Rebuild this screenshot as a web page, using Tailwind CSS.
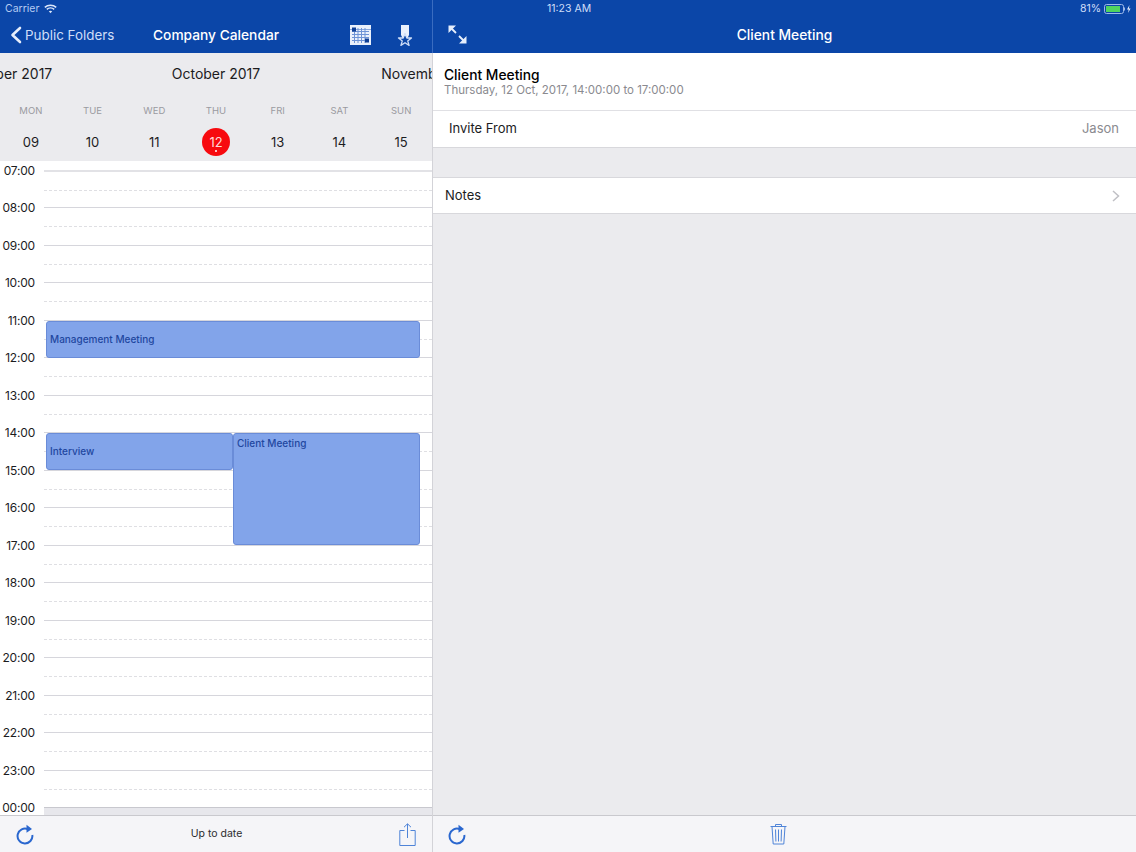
<!DOCTYPE html>
<html lang="en">
<head>
  <meta charset="UTF-8" />
  <title>Company Calendar</title>
  <script src="https://cdn.jsdelivr.net/npm/@tailwindcss/browser@4"></script>
</head>
<body class="w-[1136px] h-[852px] overflow-hidden font-['Inter','Liberation_Sans',sans-serif] bg-[#ebebee]">
<div class="flex h-[852px]">

  <!-- left pane: calendar -->
  <div class="w-[432px] shrink-0 flex flex-col">
    <div class="h-[53px] bg-[#0b46a8] text-white">
      <div class="h-[17px] flex items-center gap-[5px] pl-[5px] text-[10.5px] text-[#b4cbf2]">
        <span>Carrier</span>
        <svg width="13" height="10" viewBox="0 0 13 10" fill="none" stroke="#dce7fa" stroke-width="1.5"><path d="M.8 3.4C4 .5 9 .5 12.2 3.4M2.8 5.4C4.9 3.6 8.1 3.6 10.2 5.4"/><path d="M4.8 7.3C5.8 6.5 7.2 6.5 8.2 7.3L6.5 9.2z" fill="#dce7fa" stroke="none"/></svg>
      </div>
      <div class="h-[36px] flex items-center">
        <div class="w-[153px] flex items-center shrink-0">
          <svg class="ml-[10px]" width="12" height="18" viewBox="0 0 12 18" fill="none" stroke="#e6eefc" stroke-width="2.6" stroke-linecap="round" stroke-linejoin="round"><path d="M10 2 2.5 9l7.500 7"/></svg>
          <span class="ml-[3px] text-[13.4px] text-[#cfdef8] whitespace-nowrap">Public Folders</span>
        </div>
        <span class="w-[126px] shrink-0 text-[13.75px] font-medium whitespace-nowrap">Company Calendar</span>
        <svg class="ml-[71px]" width="21" height="20" viewBox="0 0 21 20">
          <rect width="21" height="20" fill="#e9f0fc"/>
          <path d="M0 4.500h21" stroke="#8ba9dd" stroke-width="1"/>
          <path d="M2 6.500h17M2 9.500h17M2 12.500h17M2 15.500h17M4.500 3v15M8 3v15M11.500 3v15M15 3v15" stroke="#6d93d6" stroke-width="1"/>
          <rect x="2" y="2.500" width="4" height="4" fill="#0f3f96"/>
          <rect x="15" y="13.500" width="4" height="4" fill="#0f3f96"/>
        </svg>
        <svg class="ml-[26px]" width="16" height="21" viewBox="0 0 16 21">
          <path d="M4 0h8v10l-1.500 3h-5L4 10z" fill="#e9f0fc"/>
          <path d="M8 8.500 9.800 13h4.700l-3.800 2.900 1.400 4.500L8 17.700l-4.100 2.700 1.400-4.500L1.500 13h4.700z" fill="#0b46a8" stroke="#cfdef8" stroke-width="1.300" stroke-linejoin="round"/>
        </svg>
      </div>
    </div>

    <div class="h-[108px] bg-[#ebebee] overflow-hidden">
      <div class="h-[42px] pt-[12px] grid grid-cols-[1fr_auto_1fr] gap-[121px] text-[14px] leading-[18px] text-[#1c1c1e] overflow-hidden">
        <div class="flex justify-end min-w-0"><span class="whitespace-nowrap mr-[-1.5px]">September 2017</span></div>
        <span class="whitespace-nowrap">October 2017</span>
        <div class="flex justify-start min-w-0"><span class="whitespace-nowrap">November 2017</span></div>
      </div>
      <div class="grid grid-cols-7 text-center text-[9.5px] leading-[12px] text-[#9a9aa0] mt-[10px]">
        <span>MON</span><span>TUE</span><span>WED</span><span>THU</span><span>FRI</span><span>SAT</span><span>SUN</span>
      </div>
      <div class="grid grid-cols-7 text-center text-[13px] leading-[28px] text-[#1c1c1e] mt-[11px] items-center h-[28px]">
        <span>09</span><span>10</span><span>11</span>
        <span class="relative mx-auto w-[28px] h-[28px] rounded-full bg-[#f70a0f] text-[#ffd9d9]">12<span class="absolute left-[13px] top-[22px] w-[2px] h-[2px] rounded-full bg-white"></span></span>
        <span>13</span><span>14</span><span>15</span>
      </div>
    </div>

    <div class="relative flex-1 bg-white overflow-hidden pt-[9px] text-[12px] tracking-[-0.2px] leading-[16px] text-[#1c1c1e]">
      <div class="flex h-[37.47px]"><span class="w-[44px] pr-[9px] text-right -mt-[7px]">07:00</span><div class="flex-1 border-t-2 border-[#e2e2e6]"><div class="mt-[17.5px] border-t border-dashed border-[#dfdfe3]"></div></div></div>
      <div class="flex h-[37.47px]"><span class="w-[44px] pr-[9px] text-right -mt-[7px]">08:00</span><div class="flex-1 border-t border-[#d6d6dc]"><div class="mt-[18px] border-t border-dashed border-[#dfdfe3]"></div></div></div>
      <div class="flex h-[37.47px]"><span class="w-[44px] pr-[9px] text-right -mt-[7px]">09:00</span><div class="flex-1 border-t border-[#d6d6dc]"><div class="mt-[18px] border-t border-dashed border-[#dfdfe3]"></div></div></div>
      <div class="flex h-[37.47px]"><span class="w-[44px] pr-[9px] text-right -mt-[7px]">10:00</span><div class="flex-1 border-t border-[#d6d6dc]"><div class="mt-[18px] border-t border-dashed border-[#dfdfe3]"></div></div></div>
      <div class="flex h-[37.47px]"><span class="w-[44px] pr-[9px] text-right -mt-[7px]">11:00</span><div class="flex-1 border-t border-[#d6d6dc]"><div class="mt-[18px] border-t border-dashed border-[#dfdfe3]"></div></div></div>
      <div class="flex h-[37.47px]"><span class="w-[44px] pr-[9px] text-right -mt-[7px]">12:00</span><div class="flex-1 border-t border-[#d6d6dc]"><div class="mt-[18px] border-t border-dashed border-[#dfdfe3]"></div></div></div>
      <div class="flex h-[37.47px]"><span class="w-[44px] pr-[9px] text-right -mt-[7px]">13:00</span><div class="flex-1 border-t border-[#d6d6dc]"><div class="mt-[18px] border-t border-dashed border-[#dfdfe3]"></div></div></div>
      <div class="flex h-[37.47px]"><span class="w-[44px] pr-[9px] text-right -mt-[7px]">14:00</span><div class="flex-1 border-t border-[#d6d6dc]"><div class="mt-[18px] border-t border-dashed border-[#dfdfe3]"></div></div></div>
      <div class="flex h-[37.47px]"><span class="w-[44px] pr-[9px] text-right -mt-[7px]">15:00</span><div class="flex-1 border-t border-[#d6d6dc]"><div class="mt-[18px] border-t border-dashed border-[#dfdfe3]"></div></div></div>
      <div class="flex h-[37.47px]"><span class="w-[44px] pr-[9px] text-right -mt-[7px]">16:00</span><div class="flex-1 border-t border-[#d6d6dc]"><div class="mt-[18px] border-t border-dashed border-[#dfdfe3]"></div></div></div>
      <div class="flex h-[37.47px]"><span class="w-[44px] pr-[9px] text-right -mt-[7px]">17:00</span><div class="flex-1 border-t border-[#d6d6dc]"><div class="mt-[18px] border-t border-dashed border-[#dfdfe3]"></div></div></div>
      <div class="flex h-[37.47px]"><span class="w-[44px] pr-[9px] text-right -mt-[7px]">18:00</span><div class="flex-1 border-t border-[#d6d6dc]"><div class="mt-[18px] border-t border-dashed border-[#dfdfe3]"></div></div></div>
      <div class="flex h-[37.47px]"><span class="w-[44px] pr-[9px] text-right -mt-[7px]">19:00</span><div class="flex-1 border-t border-[#d6d6dc]"><div class="mt-[18px] border-t border-dashed border-[#dfdfe3]"></div></div></div>
      <div class="flex h-[37.47px]"><span class="w-[44px] pr-[9px] text-right -mt-[7px]">20:00</span><div class="flex-1 border-t border-[#d6d6dc]"><div class="mt-[18px] border-t border-dashed border-[#dfdfe3]"></div></div></div>
      <div class="flex h-[37.47px]"><span class="w-[44px] pr-[9px] text-right -mt-[7px]">21:00</span><div class="flex-1 border-t border-[#d6d6dc]"><div class="mt-[18px] border-t border-dashed border-[#dfdfe3]"></div></div></div>
      <div class="flex h-[37.47px]"><span class="w-[44px] pr-[9px] text-right -mt-[7px]">22:00</span><div class="flex-1 border-t border-[#d6d6dc]"><div class="mt-[18px] border-t border-dashed border-[#dfdfe3]"></div></div></div>
      <div class="flex h-[37.47px]"><span class="w-[44px] pr-[9px] text-right -mt-[7px]">23:00</span><div class="flex-1 border-t border-[#d6d6dc]"><div class="mt-[18px] border-t border-dashed border-[#dfdfe3]"></div></div></div>
      <div class="flex h-[37.47px]"><span class="w-[44px] pr-[9px] text-right -mt-[7px]">00:00</span><div class="flex-1 border-t border-[#c8c8ce] bg-[#e7e7ec]"></div></div>

      <!-- events sit on top of the hour grid -->
      <div class="absolute left-[46px] top-[160px] w-[374px] h-[37px] flex items-center pl-[3px] pb-[2px] rounded-[3px] bg-[#82a4ea] border border-[#6a8cd8] text-[10px] tracking-normal font-medium text-[#1f47a0]">Management Meeting</div>
      <div class="absolute left-[46px] top-[272px] w-[187px] h-[37px] flex items-center pl-[3px] pb-[2px] rounded-[3px] bg-[#82a4ea] border border-[#6a8cd8] text-[10px] tracking-normal font-medium text-[#1f47a0]">Interview</div>
      <div class="absolute left-[233px] top-[272px] w-[187px] h-[112px] pl-[3px] pt-[1px] rounded-[3px] bg-[#82a4ea] border border-[#6a8cd8] text-[10px] tracking-normal font-medium text-[#1f47a0]">Client Meeting</div>
    </div>

    <div class="h-[37px] bg-[#f5f5f8] border-t border-[#c9c9ce] flex items-center justify-between pl-[16px] pr-[16px]">
      <svg width="18" height="21" viewBox="0 0 18 21" fill="none"><path d="M12 5.300A7.400 7.400 0 1 0 16.300 11" stroke="#2a67cf" stroke-width="2"/><path d="M10.500 .8 16 5l-5.500 3.800z" fill="#2a67cf"/></svg>
      <span class="text-[10.5px] text-[#2c2c2e]">Up to date</span>
      <svg width="17" height="23" viewBox="0 0 17 23" fill="none" stroke="#4f84d8" stroke-width="1"><path d="M5.500 7.500H.8v15h15.400v-15h-4.700M8.500 15V1M5 4.200 8.500 .8 12 4.200"/></svg>
    </div>
  </div>

  <div class="w-px shrink-0 flex flex-col bg-[#d3d3d8]"><div class="h-[53px] bg-[#3a6cc0]"></div></div>

  <!-- right pane: event detail -->
  <div class="flex-1 flex flex-col">
    <div class="h-[53px] bg-[#0b46a8] text-white">
      <div class="h-[17px] flex items-center pl-[114px] pr-[5px] text-[10.5px] text-[#cfdef8]">
        <span>11:23 AM</span>
        <span class="ml-auto">81%</span>
        <svg class="ml-[3px]" width="27" height="10" viewBox="0 0 27 10"><rect x=".5" y=".5" width="19" height="9" rx="2" fill="none" stroke="#9db9ea"/><rect x="2" y="2" width="14" height="6" fill="#4fd45f"/><path d="M20.500 3.500v3" stroke="#9db9ea"/><path d="M25.500 1 23 5.500h1.700L24 9l2.600-4.500h-1.700z" fill="#e6eefc"/></svg>
      </div>
      <div class="h-[36px] relative flex items-center justify-center">
        <svg class="absolute left-[15px] top-[8px]" width="19" height="19" viewBox="0 0 19 19" fill="none" stroke="#e6eefc" stroke-width="1.800"><path d="M2 2 8 8M17 17l-6-6"/><path d="M.5.500h7.500L.5 8zM18.500 18.500H11l7.500-7.500z" fill="#e6eefc" stroke="none"/></svg>
        <span class="text-[13.8px] font-medium">Client Meeting</span>
      </div>
    </div>

    <div class="h-[58px] bg-white border-b border-[#e0e0e4] pl-[11px] pt-[14px]">
      <div class="text-[13.8px] leading-[16px] font-medium text-black">Client Meeting</div>
      <div class="text-[11.5px] leading-[15px] text-[#8a8a8f]">Thursday, 12 Oct, 2017, 14:00:00 to 17:00:00</div>
    </div>
    <div class="h-[37px] bg-white border-b border-[#d8d8dc] flex items-center justify-between pl-[16px] pr-[17px] text-[13px] text-[#1c1c1e]">
      <span>Invite From</span><span class="text-[#8a8a8f]">Jason</span>
    </div>
    <div class="h-[29px]"></div>
    <div class="h-[37px] bg-white border-y border-[#d8d8dc] flex items-center justify-between pl-[12px] pr-[16px] text-[13px] text-[#1c1c1e]">
      <span>Notes</span>
      <svg width="8" height="12" viewBox="0 0 8 12" fill="none" stroke="#c0c0c5" stroke-width="1.500"><path d="M1 1l5.500 5L1 11"/></svg>
    </div>
    <div class="flex-1"></div>
    <div class="h-[37px] bg-[#f5f5f8] border-t border-[#c9c9ce] flex items-center pl-[15px]">
      <svg width="18" height="21" viewBox="0 0 18 21" fill="none"><path d="M12 5.300A7.400 7.400 0 1 0 16.300 11" stroke="#2a67cf" stroke-width="2"/><path d="M10.500 .8 16 5l-5.500 3.800z" fill="#2a67cf"/></svg>
      <svg class="ml-[304px]" width="17" height="22" viewBox="0 0 17 22" fill="none" stroke="#4f84d8" stroke-width="1"><path d="M.5 3.500h16M5.500 3.500V1.500h6v2M2 3.500l1.200 17.500h10.600L15 3.500M5.500 6.500l.4 12M8.500 6.500v12M11.500 6.500l-.4 12"/></svg>
    </div>
  </div>
</div>
</body>
</html>
